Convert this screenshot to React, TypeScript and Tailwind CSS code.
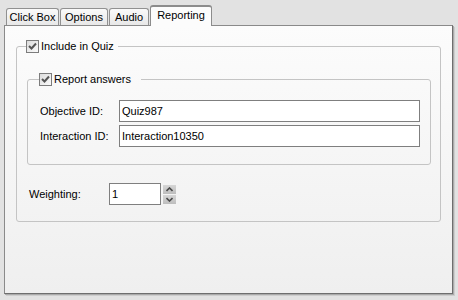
import React from 'react';

const CheckBox = () => (
  <span className="flex h-[13px] w-[13px] items-center justify-center border border-[#7c7c7c] bg-linear-to-br from-[#dcdcdc] to-[#fbfbfb]">
    <svg width="11" height="11" viewBox="0 0 11 11">
      <path d="M2 5 L4.5 7.5 L9 2.5" fill="none" stroke="#555" strokeWidth="2" />
    </svg>
  </span>
);

const tabs = [
  { label: 'Click Box', width: 'w-[53px]' },
  { label: 'Options', width: 'w-[48px]' },
  { label: 'Audio', width: 'w-[40px]' },
];

const Spinner = () => (
  <div className="ml-[1px] flex h-[21px] w-[15px] flex-col gap-[1px] border border-[#f4f4f4]">
    <div className="flex flex-1 items-center justify-center bg-linear-to-b from-[#d6d6d6] to-[#bdbdbd]">
      <svg width="7" height="5" viewBox="0 0 7 5">
        <path d="M0.5 4 L3.5 1 L6.5 4" fill="none" stroke="#4a4a4a" strokeWidth="1.6" />
      </svg>
    </div>
    <div className="flex flex-1 items-center justify-center bg-linear-to-b from-[#d6d6d6] to-[#bdbdbd]">
      <svg width="7" height="5" viewBox="0 0 7 5">
        <path d="M0.5 1 L3.5 4 L6.5 1" fill="none" stroke="#4a4a4a" strokeWidth="1.6" />
      </svg>
    </div>
  </div>
);

const App = () => {
  return (
    <div className="h-[300px] w-[458px] bg-[#e2e2e2] pl-[4px] pt-[5px] font-['Liberation_Sans',Arial,sans-serif] text-[11px] text-black">
      {/* tab strip */}
      <div className="flex h-[20px] items-end gap-[1px] pl-[2px]">
        {tabs.map((t) => (
          <div
            key={t.label}
            className={`${t.width} flex h-[17px] items-center justify-center rounded-t-[3px] border border-b-0 border-[#919191] bg-linear-to-b from-[#fafafa] to-[#e8e8e8] leading-none`}
          >
            {t.label}
          </div>
        ))}
        <div className="relative z-10 -mb-[1px] flex h-[21px] w-[62px] items-start justify-center rounded-t-[3px] border border-b-0 border-t-2 border-[#8c8c8c] bg-[#fcfcfc] pt-[3px] leading-none">
          Reporting
        </div>
      </div>

      {/* panel */}
      <div className="h-[269px] w-[449px] border border-[#8a8a8a] border-r-[#6e6e6e] border-b-[#6e6e6e] bg-linear-to-b from-[#fcfcfc] to-[#efefef] pl-[11px] pt-[13px] shadow-[1px_1px_0_#aaaaaa,2px_2px_0_#cdcdcd]">
        <fieldset className="w-[425px] rounded-[3px] border border-[#c4c4c4]">
          <legend className="ml-[9px] flex h-[14px] items-center gap-[2px] pr-[4px]">
            <CheckBox />
            <span>Include in Quiz</span>
          </legend>
          <div className="pl-[10px] pt-[19px] pb-[16px]">
            <fieldset className="w-[404px] rounded-[3px] border border-[#c4c4c4]">
              <legend className="ml-[11px] flex h-[14px] items-center gap-[2px] pr-[10px]">
                <CheckBox />
                <span>Report answers</span>
              </legend>
              <div className="flex flex-col gap-[3px] pl-[12px] pt-[14px] pb-[17px]">
                <div className="flex items-center">
                  <span className="w-[79px]">Objective ID:</span>
                  <div className="flex h-[22px] w-[301px] items-center border border-[#7f7f7f] bg-white pl-[2px]">Quiz987</div>
                </div>
                <div className="flex items-center">
                  <span className="w-[79px]">Interaction ID:</span>
                  <div className="flex h-[22px] w-[301px] items-center border border-[#7f7f7f] bg-white pl-[2px]">Interaction10350</div>
                </div>
              </div>
            </fieldset>
            <div className="ml-[2px] mt-[18px] flex items-center">
              <span className="w-[80px]">Weighting:</span>
              <div className="flex h-[22px] w-[52px] items-center border border-[#7f7f7f] bg-white pl-[2px]">1</div>
              <Spinner />
            </div>
          </div>
        </fieldset>
      </div>
    </div>
  );
};

export default App;
